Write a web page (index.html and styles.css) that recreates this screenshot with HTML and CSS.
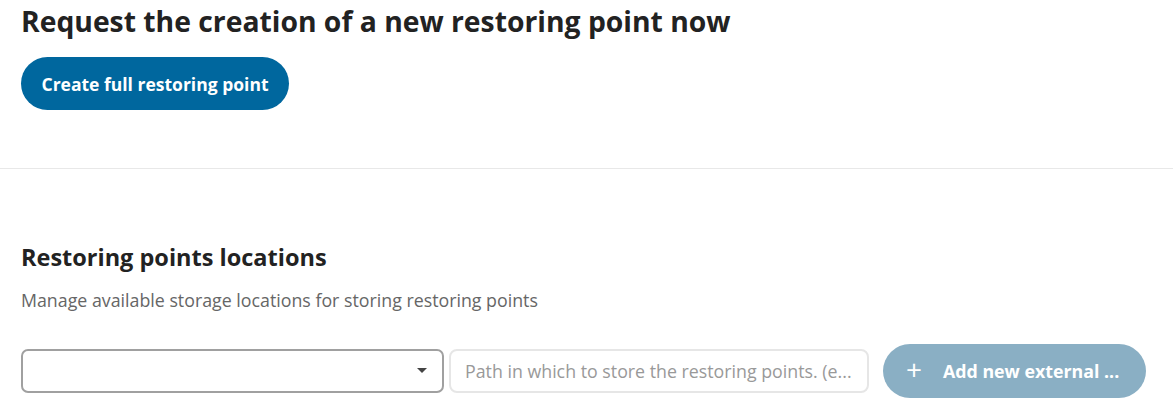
FILE: index.html
```html
<!DOCTYPE html>
<html>
<head>
<meta charset="utf-8">
<link rel="stylesheet" href="styles.css">
</head>
<body>
<section class="top">
  <h1 class="title">Request the creation of a new restoring point now</h1>
  <button class="btn-primary">Create full restoring point</button>
</section>
<hr class="divider">
<section class="locations">
  <h2 class="subtitle">Restoring points locations</h2>
  <p class="desc">Manage available storage locations for storing restoring points</p>
  <div class="row">
    <div class="select"><span class="caret"></span></div>
    <div class="input">Path in which to store the restoring points. (e...</div>
    <button class="btn-add"><span class="plus">+</span>Add new external ...</button>
  </div>
</section>
</body>
</html>
```
FILE: styles.css
```css
* { box-sizing: border-box; }
body {
  margin: 0;
  font-family: "Open Sans", "Noto Sans", sans-serif;
  color: #222;
  background: #fff;
}
.top { padding: 3px 21px 0; }
.title {
  margin: 0;
  font-size: 28.3px;
  font-weight: 700;
  line-height: 36px;
  color: #222;
}
.btn-primary {
  margin-top: 18px;
  height: 53px;
  width: 268px;
  border: none;
  border-radius: 27px;
  background: #00679e;
  color: #fff;
  font-family: inherit;
  font-size: 17.5px;
  font-weight: 700;
  padding: 0;
}
.divider {
  margin: 58px 0 0;
  border: none;
  border-top: 1px solid #e8e8e8;
}
.locations { padding: 72px 21px 0; }
.subtitle {
  margin: 0;
  font-size: 23.5px;
  font-weight: 700;
  line-height: 32px;
}
.desc {
  margin: 15px 0 0;
  font-size: 17.8px;
  color: #666;
  line-height: 24px;
}
.row {
  margin-top: 32px;
  display: flex;
  align-items: center;
}
.select {
  width: 423px;
  height: 44px;
  border: 2px solid #a0a0a0;
  border-radius: 7px;
  position: relative;
}
.caret {
  position: absolute;
  right: 15px;
  top: 17px;
  border-left: 5px solid transparent;
  border-right: 5px solid transparent;
  border-top: 5px solid #444;
}
.input {
  margin-left: 5px;
  width: 420px;
  height: 44px;
  border: 2px solid #e6e6e6;
  border-radius: 8px;
  padding: 0 14px;
  display: flex;
  align-items: center;
  color: #999;
  font-size: 17.8px;
  white-space: nowrap;
  overflow: hidden;
}
.btn-add {
  margin-left: 14px;
  width: 263px;
  height: 54px;
  border: none;
  border-radius: 27px;
  background: #8aafc4;
  color: #fff;
  font-family: inherit;
  font-size: 17.8px;
  font-weight: 700;
  display: flex;
  align-items: center;
  padding: 0 23px;
  white-space: nowrap;
}
.plus {
  font-size: 28px;
  font-weight: 400;
  margin-right: 21px;
  line-height: 1;
  position: relative;
  top: -2px;
}
```
